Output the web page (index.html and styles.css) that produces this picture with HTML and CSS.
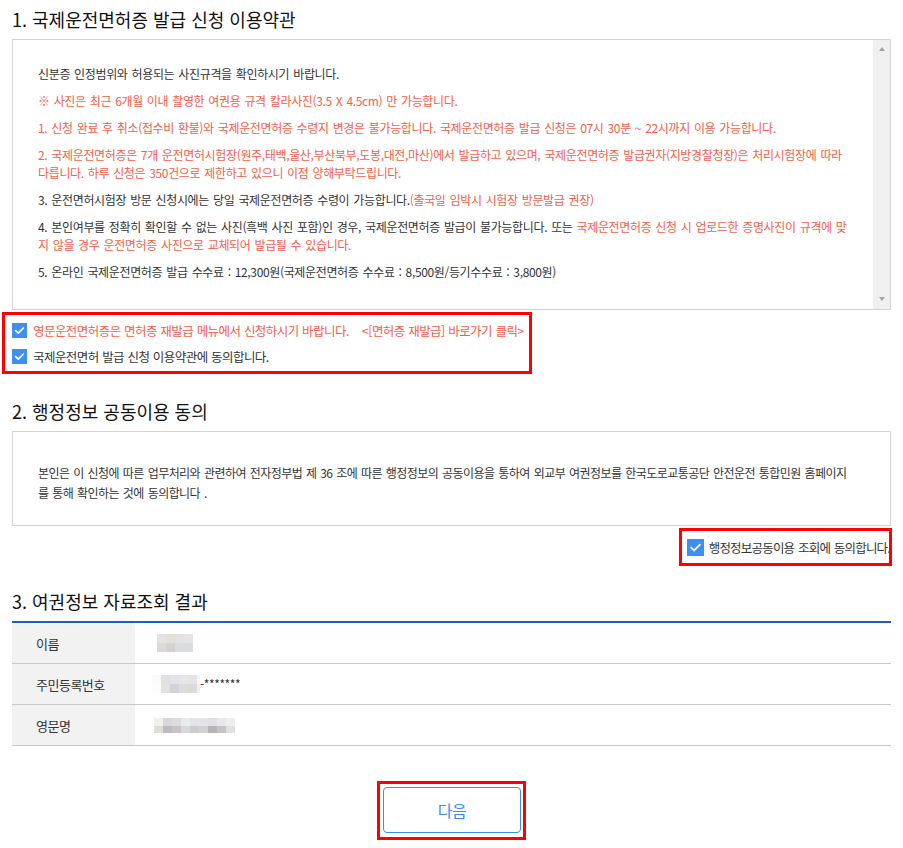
FILE: index.html
```html
<!DOCTYPE html>
<html lang="ko">
<head>
<meta charset="utf-8">
<title>국제운전면허증 발급 신청</title>
<link rel="stylesheet" href="styles.css">
</head>
<body>
<div class="page">
  <h2 class="sec-title t1">1. 국제운전면허증 발급 신청 이용약관</h2>
  <div class="terms-box">
    <div class="terms-content">
      <p>신분증 인정범위와 허용되는 사진규격을 확인하시기 바랍니다.</p>
      <p class="red">※ 사진은 최근 6개월 이내 촬영한 여권용 규격 칼라사진(3.5 X 4.5cm) 만 가능합니다.</p>
      <p class="red">1. 신청 완료 후 취소(접수비 환불)와 국제운전면허증 수령지 변경은 불가능합니다. 국제운전면허증 발급 신청은 07시 30분 ~ 22시까지 이용 가능합니다.</p>
      <p class="red">2. 국제운전면허증은 7개 운전면허시험장(원주,태백,울산,부산북부,도봉,대전,마산)에서 발급하고 있으며, 국제운전면허증 발급권자(지방경찰청장)은 처리시험장에 따라<br>다릅니다. 하루 신청은 350건으로 제한하고 있으니 이점 양해부탁드립니다.</p>
      <p>3. 운전면허시험장 방문 신청시에는 당일 국제운전면허증 수령이 가능합니다.<span class="red">(출국일 임박시 시험장 방문발급 권장)</span></p>
      <p>4. 본인여부를 정확히 확인할 수 없는 사진(흑백 사진 포함)인 경우, 국제운전면허증 발급이 불가능합니다. 또는 <span class="red">국제운전면허증 신청 시 업로드한 증명사진이 규격에 맞<br>지 않을 경우 운전면허증 사진으로 교체되어 발급될 수 있습니다.</span></p>
      <p>5. 온라인 국제운전면허증 발급 수수료 : 12,300원(국제운전면허증 수수료 : 8,500원/등기수수료 : 3,800원)</p>
    </div>
    <div class="scrollbar"><span class="arrow up"></span><span class="arrow down"></span></div>
  </div>

  <div class="mark mark-agree">
    <label class="chk-row">
      <span class="chk"><svg viewBox="0 0 15 15" width="15" height="15"><path d="M3.6 7.6 L6.3 10.1 L11.4 5" fill="none" stroke="#fff" stroke-width="1.7" stroke-linecap="round" stroke-linejoin="round"/></svg></span>
      <span class="red">영문운전면허증은 면허증 재발급 메뉴에서 신청하시기 바랍니다.</span>
      <span class="red link">&lt;[면허증 재발급] 바로가기 클릭&gt;</span>
    </label>
    <label class="chk-row">
      <span class="chk"><svg viewBox="0 0 15 15" width="15" height="15"><path d="M3.6 7.6 L6.3 10.1 L11.4 5" fill="none" stroke="#fff" stroke-width="1.7" stroke-linecap="round" stroke-linejoin="round"/></svg></span>
      <span>국제운전면허 발급 신청 이용약관에 동의합니다.</span>
    </label>
  </div>

  <h2 class="sec-title t2">2. 행정정보 공동이용 동의</h2>
  <div class="info-box">
    <p>본인은 이 신청에 따른 업무처리와 관련하여 전자정부법 제 36 조에 따른 행정정보의 공동이용을 통하여 외교부 여권정보를 한국도로교통공단 안전운전 통합민원 홈페이지<br>를 통해 확인하는 것에 동의합니다 .</p>
  </div>
  <div class="right-row">
    <div class="mark mark-admin">
      <label class="chk-row">
        <span class="chk big"><svg viewBox="0 0 15 15" width="17" height="17"><path d="M3.6 7.6 L6.3 10.1 L11.4 5" fill="none" stroke="#fff" stroke-width="1.6" stroke-linecap="round" stroke-linejoin="round"/></svg></span>
        <span class="admin-text">행정정보공동이용 조회에 동의합니다.</span>
      </label>
    </div>
  </div>

  <h2 class="sec-title t3">3. 여권정보 자료조회 결과</h2>
  <table class="result">
    <tr>
      <th>이름</th>
      <td><span class="blur blur-name"></span></td>
    </tr>
    <tr>
      <th>주민등록번호</th>
      <td><span class="blur blur-rrn"></span><span class="rrn-mask">-*******</span></td>
    </tr>
    <tr>
      <th>영문명</th>
      <td><span class="blur blur-eng"></span></td>
    </tr>
  </table>

  <div class="btn-row">
    <div class="mark mark-btn">
      <button class="btn-next" type="button">다음</button>
    </div>
  </div>
</div>
</body>
</html>
```

FILE: styles.css
```css
html, body {
  margin: 0;
  padding: 0;
  background: #fff;
}
body {
  font-family: "Noto Sans CJK KR", "Noto Sans", sans-serif;
  color: #333;
  font-size: 12px;
}
.page {
  padding: 0 12px 9px;
}
.sec-title {
  margin: 0;
  padding: 0 0 7px;
  font-size: 18px;
  line-height: 26px;
  font-weight: 400;
  color: #111;
  letter-spacing: 0;
}
.t1 { margin-top: 6px; }
.t2 { margin-top: 24px; }
.t3 { margin-top: 22px; padding-bottom: 7px; }

.red { color: #f2604a; }

.terms-box {
  display: flex;
  border: 1px solid #d5d5d5;
}
.terms-content {
  flex: 1;
  padding: 25px 25px 28px;
}
.terms-content p {
  margin: 0 0 9px;
  line-height: 18px;
  white-space: nowrap;
  letter-spacing: -0.35px;
  word-spacing: 1px;
}
.terms-content p:last-child { margin-bottom: 0; }
.scrollbar {
  width: 17px;
  background: #f0f0f0;
  display: flex;
  flex-direction: column;
  justify-content: space-between;
  align-items: center;
  padding: 7px 0 8px;
}
.arrow {
  width: 0;
  height: 0;
  border-left: 3.5px solid transparent;
  border-right: 3.5px solid transparent;
}
.arrow.up { border-bottom: 4px solid #a3a3a3; }
.arrow.down { border-top: 4px solid #a3a3a3; }

.mark {
  border: 3px solid #f00;
}
.mark-agree {
  width: fit-content;
  margin: 2px 0 0 -10px;
  padding: 2px 5px 2px 7px;
}
.chk-row {
  display: flex;
  align-items: center;
  height: 26px;
  white-space: nowrap;
  font-size: 12.5px;
  letter-spacing: -0.55px;
  word-spacing: 0.5px;
}
.chk {
  width: 15px;
  height: 15px;
  background: #3d8ff0;
  display: inline-flex;
  flex: none;
  margin-right: 6px;
}
.chk.big {
  width: 17px;
  height: 17px;
  margin-right: 5px;
}
.link { margin-left: 13px; }

.info-box {
  border: 1px solid #d5d5d5;
  padding: 31px 25px 22px;
}
.info-box p {
  margin: 0;
  line-height: 20px;
  white-space: nowrap;
  letter-spacing: -0.55px;
  word-spacing: 1px;
}

.right-row {
  display: flex;
  justify-content: flex-end;
  margin-right: -1px;
}
.mark-admin {
  margin-top: 2px;
  padding: 0 0 0 5px;
  height: 32px;
  display: flex;
  align-items: center;
  overflow: hidden;
}
.mark-admin .chk-row { height: 32px; }
.admin-text { font-size: 12.5px; letter-spacing: -0.8px; word-spacing: 1px; margin-right: -1px; }

.result {
  width: 100%;
  border-collapse: collapse;
  border-top: 2px solid #1660be;
}
.result th, .result td {
  height: 40px;
  padding: 0;
  border-bottom: 1px solid #c8c8c8;
  font-weight: 400;
  text-align: left;
  vertical-align: middle;
}
.result th {
  width: 99px;
  padding-left: 24px;
  background: #f2f2f2;
  color: #333;
  font-size: 13px;
  letter-spacing: -0.5px;
}
.result td {
  padding-left: 17px;
}
.blur {
  display: inline-block;
  vertical-align: middle;
}
.blur-name {
  width: 36px;
  height: 18px;
  margin-left: 5px;
  margin-top: -2px;
  background:
    linear-gradient(to right, #e3e3e3 0 9px, #e3e0dc 9px 18px, #e2e2e4 18px 27px, #e2e4e6 27px) top / 100% 9px no-repeat,
    linear-gradient(to right, #dcdad8 0 9px, #d4d2d0 9px 18px, #dadcdf 18px 27px, #dadcde 27px) bottom / 100% 9px no-repeat;
}
.blur-rrn {
  width: 48px;
  height: 18px;
  margin-top: -2px;
  background:
    linear-gradient(to right, #fafafa 0 9px, #e0e0e0 9px 18px, #e4e4e8 18px 27px, #e6e6e8 27px 36px, #e4e4e4 36px 45px, #f4f4f4 45px) top / 100% 9px no-repeat,
    linear-gradient(to right, #fcfcfa 0 9px, #e2e2e0 9px 18px, #d2d2d8 18px 27px, #dcdcdc 27px 36px, #dcdad8 36px 45px, #eceef0 45px) bottom / 100% 9px no-repeat;
}
.rrn-mask {
  display: inline-block;
  vertical-align: middle;
  margin-top: -4px;
  font-size: 12px;
  letter-spacing: -0.4px;
  color: #333;
}
.blur-eng {
  width: 81px;
  height: 15px;
  margin-left: 2px;
  margin-top: -3px;
  background:
    linear-gradient(to right, #f0f0f0 0 9px, #d8d8d8 9px 18px, #dcdcdc 18px 27px, #e8ecee 27px 36px, #e4e4e6 36px 45px, #e4e4e8 45px 54px, #e0e0e4 54px 63px, #e8e8ec 63px 72px, #eceef0 72px) top / 100% 8px no-repeat,
    linear-gradient(to right, #e0dcd8 0 9px, #bcbcc0 9px 18px, #c8c4c6 18px 27px, #d8d8da 27px 36px, #cccccc 36px 45px, #d0d2d4 45px 54px, #b8b4b4 54px 63px, #c4c4c4 63px 72px, #e0e0e0 72px) bottom / 100% 7px no-repeat;
}

.btn-row {
  display: flex;
  justify-content: center;
  margin-top: 35px;
}
.mark-btn {
  padding: 3px 2px 4px 3px;
  display: flex;
}
.btn-next {
  width: 138px;
  height: 46px;
  background: #fff;
  border: 1px solid #3b8de6;
  border-radius: 4px;
  color: #3a8ee8;
  font-family: "Noto Sans CJK KR", "Noto Sans", sans-serif;
  font-size: 16px;
  letter-spacing: -0.5px;
  padding: 0;
}
```
